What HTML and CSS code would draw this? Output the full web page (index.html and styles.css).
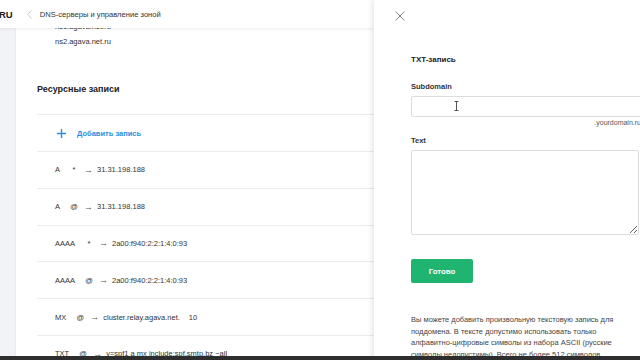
FILE: index.html
```html
<!DOCTYPE html>
<html lang="ru">
<head>
    <meta charset="UTF-8">
    <meta name="viewport" content="width=device-width, initial-scale=1.0">
    <title>DNS-серверы и управление зоной</title>
    <link rel="stylesheet" href="styles.css">
</head>
<body>

    <div class="app">
        <header class="topbar">
            <span class="logo">RU</span>
            <svg class="back" width="5" height="9" viewBox="0 0 5 9">
                <path d="M4.5 0.5 L0.8 4.5 L4.5 8.5" fill="none" stroke="#c9c9c9" stroke-width="1"/>
            </svg>
            <span class="crumb">DNS-серверы и управление зоной</span>
        </header>

        <div class="workspace">
            <aside class="sidebar"></aside>

            <main class="content">
                <div class="scroll">
                    <ul class="ns-list">
                        <li>ns1.agava.net.ru</li>
                        <li>ns2.agava.net.ru</li>
                    </ul>

                    <section class="records">
                        <h3>Ресурсные записи</h3>

                        <div class="add-row">
                            <svg class="plus" width="9" height="9" viewBox="0 0 9 9">
                                <path d="M4.5 0 V9 M0 4.5 H9" stroke="#2a8ee0" stroke-width="1.4"/>
                            </svg>
                            <span>Добавить запись</span>
                        </div>

                        <div class="record">
                            <span class="type">A</span><span class="host">*</span><span class="arrow">→</span><span class="value">31.31.198.188</span>
                        </div>
                        <div class="record">
                            <span class="type">A</span><span class="host">@</span><span class="arrow">→</span><span class="value">31.31.198.188</span>
                        </div>
                        <div class="record">
                            <span class="type">AAAA</span><span class="host">*</span><span class="arrow">→</span><span class="value">2a00:f940:2:2:1:4:0:93</span>
                        </div>
                        <div class="record">
                            <span class="type">AAAA</span><span class="host">@</span><span class="arrow">→</span><span class="value">2a00:f940:2:2:1:4:0:93</span>
                        </div>
                        <div class="record">
                            <span class="type">MX</span><span class="host">@</span><span class="arrow">→</span><span class="value">cluster.relay.agava.net.</span><span class="prio">10</span>
                        </div>
                        <div class="record">
                            <span class="type">TXT</span><span class="host">@</span><span class="arrow">→</span><span class="value">v=spf1 a mx include:spf.smtp.bz ~all</span>
                        </div>
                    </section>
                </div>
            </main>
        </div>
    </div>

    <!-- Side panel -->
    <div class="drawer">
        <svg class="close" width="10" height="10" viewBox="0 0 10 10">
            <path d="M0.5 0.5 L9.5 9.5 M9.5 0.5 L0.5 9.5" stroke="#8a8a8a" stroke-width="1"/>
        </svg>

        <div class="drawer-body">
            <h4>TXT-запись</h4>

            <label for="subdomain">Subdomain</label>
            <div class="field">
                <input type="text" id="subdomain" name="subdomain">
                <svg class="ibeam" width="5" height="10" viewBox="0 0 5 10">
                    <path d="M0.5 0.5 H4.5 M2.5 0.5 V9.5 M0.5 9.5 H4.5" stroke="#555" stroke-width="1"/>
                </svg>
            </div>
            <div class="hint">.yourdomain.ru</div>

            <label for="text">Text</label>
            <textarea id="text" name="text"></textarea>

            <button type="button">Готово</button>

            <p class="note">Вы можете добавить произвольную текстовую запись для поддомена. В тексте допустимо использовать только алфавитно-цифровые символы из набора ASCII (русские символы недопустимы). Всего не более 512 символов.</p>
        </div>
    </div>

    <div class="player-bar"></div>

</body>
</html>
```

FILE: styles.css
```css
body {
    margin: 0;
    width: 640px;
    height: 360px;
    overflow: hidden;
    font-family: "Liberation Sans", Arial, sans-serif;
    color: #333;
    background: #fff;
}

.app {
    height: 100%;
    display: flex;
    flex-direction: column;
}

/* Header */

.topbar {
    flex: none;
    height: 28px;
    display: flex;
    align-items: center;
    background: #fff;
    box-shadow: 0 1px 3px rgba(0, 0, 0, 0.08);
    position: relative;
    z-index: 2;
}

.logo {
    font-size: 9.5px;
    font-weight: bold;
    color: #222;
    margin-left: -1px;
}

.back {
    margin-left: 14px;
}

.crumb {
    margin-left: 8px;
    font-size: 7.6px;
    color: #333;
}

/* Page */

.workspace {
    flex: 1;
    display: flex;
    min-height: 0;
}

.sidebar {
    width: 15px;
    flex: none;
    background: #f1f3f6;
    border-right: 1px solid #e9ebef;
}

.content {
    flex: 1;
    overflow: hidden;
}

.scroll {
    margin-top: -9px;
}

.ns-list {
    list-style: none;
    margin: 0;
    padding: 0 0 0 39px;
    font-size: 7.5px;
    line-height: 15px;
}

.records {
    margin-left: 21px;
}

.records h3 {
    margin: 34px 0 19px;
    font-size: 9px;
    line-height: 12px;
    color: #222;
}

.add-row,
.record {
    height: 36px;
    display: flex;
    align-items: center;
    border-top: 1px solid #ebebeb;
    font-size: 7.5px;
}

.add-row {
    padding-left: 20px;
    color: #2a8ee0;
    font-weight: bold;
}

.plus {
    margin-right: 11px;
}

.record {
    padding-left: 18px;
    height: 35.8px;
}

.type {
    margin-right: 10px;
}

.host {
    display: inline-block;
    width: 8px;
    text-align: center;
    margin-right: 6px;
}

.arrow {
    margin-right: 4px;
    font-size: 9px;
    color: #555;
}

.prio {
    margin-left: 9px;
}

/* Drawer */

.drawer {
    position: absolute;
    top: 0;
    right: 0;
    bottom: 0;
    width: 266px;
    background: #fff;
    box-shadow: -2px 0 6px rgba(0, 0, 0, 0.1);
    padding: 11px 0 0 21px;
    box-sizing: border-box;
    z-index: 3;
}

.close {
    display: block;
}

.drawer-body {
    padding-left: 16px;
    width: 228px;
}

.drawer-body h4 {
    margin: 33px 0 16px;
    font-size: 8px;
    line-height: 12px;
    color: #222;
}

label {
    display: block;
    font-size: 7.5px;
    line-height: 10px;
    font-weight: bold;
    color: #333;
    margin-bottom: 4px;
}

.field {
    position: relative;
}

input,
textarea {
    display: block;
    box-sizing: border-box;
    width: 100%;
    border: 1px solid #dcdcdc;
    border-radius: 2px;
    background: #fff;
    font-family: inherit;
    font-size: 7.5px;
    padding: 4px 6px;
    margin: 0;
}

input {
    height: 21px;
    width: 230px;
}

.ibeam {
    position: absolute;
    left: 43px;
    top: 5px;
}

.hint {
    text-align: right;
    font-size: 7px;
    line-height: 10px;
    color: #555;
    margin: 1px -2px 8px 0;
}

textarea {
    height: 85px;
    resize: vertical;
}

button {
    display: block;
    margin-top: 24px;
    width: 62px;
    height: 24px;
    border: none;
    border-radius: 2px;
    background: #1fb46f;
    color: #fff;
    font-family: inherit;
    font-size: 7.8px;
    font-weight: bold;
}

.note {
    margin: 31px 0 0;
    font-size: 7.5px;
    line-height: 11.5px;
    color: #444;
}

.player-bar {
    position: absolute;
    left: 0;
    right: 0;
    bottom: 0;
    height: 4px;
    background: #2e2e2e;
    z-index: 4;
}
```
